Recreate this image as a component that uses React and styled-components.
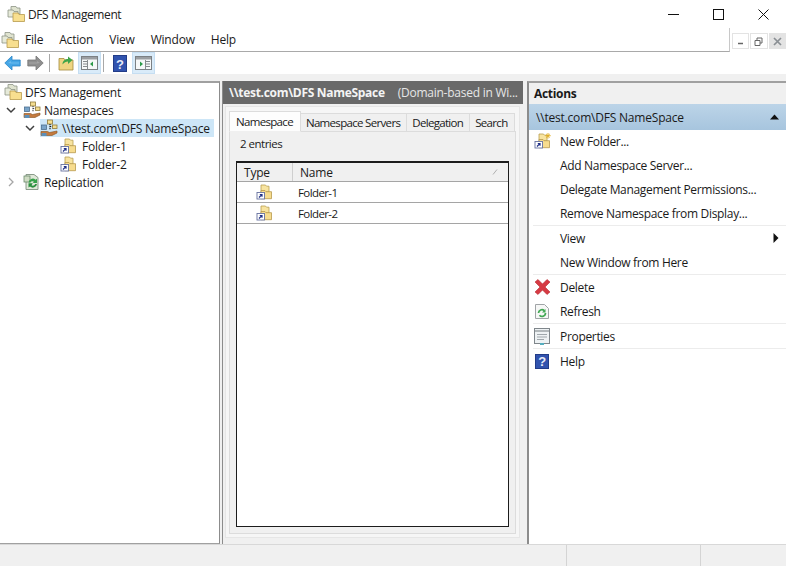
import React from 'react';
import styled, { createGlobalStyle } from 'styled-components';

const GlobalStyle = createGlobalStyle`
    html, body {
        margin: 0;
        padding: 0;
    }

    body {
        font-family: "Open Sans", "Noto Sans", sans-serif;
        font-size: 12px;
        color: #1a1a1a;
        background: #fff;
    }
`;

const Window = styled.div`
    width: 786px;
    height: 566px;
    display: flex;
    flex-direction: column;
    overflow: hidden;
    background: #f0f0f0;
`;

const TitleBar = styled.div`
    height: 28px;
    flex: none;
    display: flex;
    align-items: center;
    justify-content: space-between;
    background: #fff;
    padding-left: 7px;
`;

const TitleLeft = styled.div`
    display: flex;
    align-items: center;
    gap: 3px;
    letter-spacing: -0.4px;
    color: #222;
`;

const WindowButtons = styled.div`
    display: flex;
    align-items: center;
    gap: 34px;
    padding-right: 17px;
`;

const MenuBar = styled.div`
    height: 24px;
    flex: none;
    display: flex;
    align-items: stretch;
    background: #fff;
`;

const MenuLeft = styled.div`
    flex: 1;
    display: flex;
    align-items: center;
    padding-left: 1px;
    border-bottom: 1px solid #a9a9a9;
    border-right: 1px solid #c8c8c8;
`;

const MenuItems = styled.div`
    display: flex;
    gap: 16px;
    margin-left: 6px;
    letter-spacing: -0.2px;
`;

const MdiButtons = styled.div`
    width: 56px;
    flex: none;
    display: flex;
    gap: 1px;
    padding: 5px 0 3px 2px;
    box-sizing: border-box;
`;

const MdiButton = styled.div`
    width: 18px;
    display: flex;
    align-items: center;
    justify-content: center;
    background: ${props => (props.$muted ? '#e3e3e3' : '#fff')};
    border: 1px solid #e3e3e3;
    box-sizing: border-box;
`;

const ToolBar = styled.div`
    height: 22px;
    flex: none;
    display: flex;
    align-items: center;
    padding-left: 4px;
    background: #fff;
`;

const ToolArrow = styled.div`
    display: flex;
    margin-right: ${props => props.$after}px;
`;

const ToolButton = styled.div`
    width: 23px;
    height: 22px;
    flex: none;
    display: flex;
    align-items: center;
    justify-content: center;
    box-sizing: border-box;
    margin-right: 1px;
    background: ${props => (props.$active ? '#d9ebf9' : 'transparent')};
    border: 1px solid ${props => (props.$active ? '#c5def2' : 'transparent')};
`;

const ToolSeparator = styled.div`
    width: 1px;
    height: 18px;
    margin: 0 4px 0 1px;
    background: #a8a8a8;
`;

const Main = styled.div`
    flex: 1;
    display: grid;
    grid-template-columns: 220px 307px 259px;
    margin-top: 7px;
    min-height: 0;
`;

const TreePane = styled.div`
    background: #fff;
    border-top: 2px solid #a0a0a0;
    border-right: 1px solid #8c8c8c;
    border-bottom: 1px solid #a0a0a0;
    box-sizing: border-box;
    min-width: 0;
`;

const TreeRow = styled.div`
    height: 18px;
    display: flex;
    align-items: center;
    padding-left: ${props => props.$indent}px;
    letter-spacing: -0.2px;
    white-space: nowrap;
`;

const TreeSelection = styled.div`
    display: flex;
    align-items: center;
    height: 18px;
    width: 174px;
    gap: 4px;
    background: #cde6f7;
`;

const TreeChevron = styled.div`
    width: 14px;
    flex: none;
    display: flex;
    justify-content: center;
    margin-right: ${props => props.$after || 3}px;
`;

const TreeLabel = styled.span`
    margin-left: ${props => props.$gap || 3}px;
`;

const CenterPane = styled.div`
    display: flex;
    flex-direction: column;
    border-left: 1px solid #8c8c8c;
    margin-left: 2px;
    background: #f0f0f0;
    min-height: 0;
    min-width: 0;
    overflow: hidden;
`;

const CenterHeader = styled.div`
    height: 23px;
    width: 300px;
    box-sizing: border-box;
    flex: none;
    display: flex;
    align-items: center;
    gap: 13px;
    padding-left: 6px;
    background: #696969;
    color: #f4f4f4;
    white-space: nowrap;
    overflow: hidden;
`;

const HeaderTitle = styled.span`
    font-weight: 700;
    letter-spacing: -0.3px;
`;

const HeaderNote = styled.span`
    color: #e6e6e6;
    letter-spacing: -0.25px;
`;

const TabFrame = styled.div`
    flex: 1;
    width: 295px;
    box-sizing: border-box;
    display: flex;
    flex-direction: column;
    margin: 2px 0 6px 2px;
    padding: 4px 3px 3px 3px;
    background: #f6f6f6;
    border: 1px solid #e6e6e6;
    min-height: 0;
`;

const TabStrip = styled.div`
    display: flex;
    align-items: flex-end;
    height: 21px;
    flex: none;
    margin-bottom: -1px;
    position: relative;
`;

const Tab = styled.div`
    height: ${props => (props.$active ? 21 : 19)}px;
    box-sizing: border-box;
    display: flex;
    align-items: center;
    padding: ${props => (props.$active ? '0 7px 0 6px' : '0 6px 0 5px')};
    background: ${props => (props.$active ? '#fdfdfd' : '#f0f0f0')};
    border: 1px solid #dcdcdc;
    border-left-width: ${props => (props.$active ? 1 : 0)}px;
    border-bottom: ${props => (props.$active ? '1px solid #f0f0f0' : '1px solid #dcdcdc')};
    font-size: 11.5px;
    letter-spacing: -0.68px;
    white-space: nowrap;
`;

const TabBody = styled.div`
    flex: 1;
    display: flex;
    flex-direction: column;
    background: #f0f0f0;
    border: 1px solid #dcdcdc;
    min-height: 0;
    padding: 0 6px 6px 6px;
`;

const EntryCount = styled.div`
    height: 22px;
    flex: none;
    display: flex;
    align-items: center;
    padding: 0 0 0 4px;
    margin-bottom: 7px;
    font-size: 11.5px;
    letter-spacing: -0.5px;
`;

const ListBox = styled.div`
    flex: 1;
    background: #fff;
    border: 1px solid #1c1c1c;
    border-top-width: 2px;
    min-height: 0;
`;

const ListHeader = styled.div`
    height: 19px;
    display: grid;
    grid-template-columns: 55px 1fr;
    background: #f0f0f0;
    border-bottom: 1px solid #a5a5a5;
    box-sizing: border-box;
`;

const HeaderCell = styled.div`
    display: flex;
    align-items: center;
    justify-content: space-between;
    padding: 0 10px 0 7px;
    border-left: ${props => (props.$divided ? '1px solid #cfcfcf' : 'none')};
    letter-spacing: -0.2px;
`;

const ListRow = styled.div`
    height: 21px;
    display: grid;
    grid-template-columns: 55px 1fr;
    align-items: center;
    border-bottom: 1px solid #a5a5a5;
    box-sizing: border-box;
`;

const RowIcon = styled.div`
    display: flex;
    justify-content: center;
`;

const RowName = styled.div`
    padding-left: 6px;
    font-size: 11.5px;
    letter-spacing: -0.6px;
`;

const ActionsPane = styled.div`
    display: flex;
    flex-direction: column;
    background: #fff;
    border-left: 2px solid #8c8c8c;
    border-top: 2px solid #a0a0a0;
    min-height: 0;
    min-width: 0;
`;

const ActionsTitle = styled.div`
    height: 21px;
    flex: none;
    display: flex;
    align-items: center;
    padding-left: 5px;
    font-weight: 700;
    background: #f0f0f0;
    letter-spacing: -0.3px;
`;

const ActionsSection = styled.div`
    height: 26px;
    flex: none;
    display: flex;
    align-items: center;
    justify-content: space-between;
    padding: 0 7px;
    background: linear-gradient(#bcd4e8, #a7c5de);
    letter-spacing: -0.2px;
`;

const ActionList = styled.div`
    display: flex;
    flex-direction: column;
    margin-top: -1px;
`;

const ActionRow = styled.div`
    height: ${props => (props.$divider || props.$tall ? 25 : 24)}px;
    box-sizing: border-box;
    display: flex;
    align-items: center;
    padding-right: 7px;
    border-bottom: ${props => (props.$divider ? '1px solid #ececec' : 'none')};
    margin-left: ${props => (props.$divider ? 4 : 0)}px;
    letter-spacing: -0.32px;
`;

const ActionIcon = styled.div`
    width: ${props => (props.$divider ? 27 : 31)}px;
    padding: 0 9px 0 ${props => (props.$divider ? 0 : 4)}px;
    flex: none;
    display: flex;
    justify-content: center;
    box-sizing: border-box;
`;

const ActionText = styled.span`
    flex: 1;
    white-space: nowrap;
`;

const StatusBar = styled.div`
    height: 22px;
    flex: none;
    display: grid;
    grid-template-columns: 566px 134px 1fr;
    background: #f0f0f0;
    border-top: 1px solid #d8d8d8;
    box-sizing: border-box;
`;

const StatusCell = styled.div`
    border-left: ${props => (props.$divided ? '1px solid #d4d4d4' : 'none')};
`;

const FolderStack = () => (
    <svg width="18" height="18" viewBox="0 0 18 18">
        <path d="M4 1.500h5l1 1.500h3v6H4z" fill="#dfe3cf" stroke="#8d9486" strokeWidth="0.8" />
        <path d="M1 5h5l1 1.500h4V12H1z" fill="#e6ead9" stroke="#8d9486" strokeWidth="0.8" />
        <path d="M6 8h5l1 1.500h5.500v7H6z" fill="#f8df8f" stroke="#b89a4c" strokeWidth="0.8" />
    </svg>
);

const ShortcutFolder = ({ sparkle }) => (
    <svg width="17" height="16" viewBox="0 0 17 16">
        <path d="M5 1h4.500l1 1.200h2.500V8H5z" fill="#f8e4a0" stroke="#b9a052" strokeWidth="0.8" />
        <path d="M5 6.500h4l1 1.200h5.500v7H5z" fill="#f7dc8e" stroke="#b7994e" strokeWidth="0.8" />
        <rect x="1" y="8.500" width="7.500" height="6.500" fill="#fff" stroke="#66719f" strokeWidth="0.9" />
        <path d="M3 13.500l2.800-2.800M3.800 10.500h2.200v2.200" fill="none" stroke="#1f2f86" strokeWidth="1.200" />
        {sparkle && <path d="M14 0v5.500M11.300 2.700h5.400M12.200 1l3.600 3.500M15.800 1l-3.600 3.500" stroke="#e0ac1e" strokeWidth="0.9" />}
    </svg>
);

const NamespaceIcon = ({ dark }) => (
    <svg width="18" height="18" viewBox="0 0 18 18">
        <rect x="7.500" y="1" width="5" height="4" fill="#f3dc8f" stroke="#8f7a3a" strokeWidth="0.8" />
        <rect x="1.500" y="6" width="5" height="4.500" fill="#79a4c9" stroke="#4d6f90" strokeWidth="0.8" />
        <path d="M10 5v5.500M10 7.500h2.500" fill="none" stroke={dark ? '#111' : '#444'} strokeWidth="1.100" strokeDasharray="1.200 0.800" />
        <rect x="12.500" y="6" width="4.500" height="3.500" fill="#f3dc8f" stroke="#8f7a3a" strokeWidth="0.8" />
        <path d="M1 12.500h6.500l2 1 7.500-1.500v2l-5 2.500H1z" fill="#c47a3e" stroke="#84501f" strokeWidth="0.6" />
        <rect x="1.500" y="14" width="5" height="3" fill="#5d8fb8" />
    </svg>
);

const ReplicationIcon = () => (
    <svg width="18" height="18" viewBox="0 0 18 18">
        <path d="M3 1.500h8l4 3v12H3z" fill="#dfe8d8" stroke="#7f9180" strokeWidth="0.9" />
        <rect x="1" y="3" width="6" height="6" fill="#cfdcc4" stroke="#6c8a6c" strokeWidth="0.8" />
        <path d="M5.500 9.500a4.200 4.200 0 0 1 7-2.800l1.500-1v4.300h-4.300l1.300-1.300a2.400 2.400 0 0 0-3.700.800z" fill="#37a24a" />
        <path d="M14 11a4.200 4.200 0 0 1-7 2.500l-1.500 1v-4.300h4.300L8.500 12.300a2.400 2.400 0 0 0 3.600-1.300z" fill="#2c8f3f" />
    </svg>
);

const Chevron = ({ open }) => (
    <svg width="10" height="10" viewBox="0 0 10 10">
        {open
            ? <path d="M1 3l4 4 4-4" fill="none" stroke="#404040" strokeWidth="1.500" />
            : <path d="M3 1l4 4-4 4" fill="none" stroke="#a6a6a6" strokeWidth="1.300" />}
    </svg>
);

const BackArrow = () => (
    <svg width="17" height="16" viewBox="0 0 17 16">
        <path d="M.8 8L8 1v4h8.200v6H8v4z" fill="#45a6e6" stroke="#2c86c6" strokeWidth="0.8" />
        <path d="M4 8l3-2v1.500h8v1H7z" fill="#6dbcee" />
    </svg>
);

const ForwardArrow = () => (
    <svg width="17" height="16" viewBox="0 0 17 16">
        <path d="M16.200 8L9 1v4H.8v6H9v4z" fill="#8f8f8f" stroke="#777" strokeWidth="0.8" />
        <path d="M13 8l-3-2v1.500H2v1h8z" fill="#a5a5a5" />
    </svg>
);

const UpFolder = () => (
    <svg width="16" height="16" viewBox="0 0 16 16">
        <path d="M1 3.500h5l1 1.500h8v10H1z" fill="#efd582" stroke="#a38a3c" strokeWidth="0.8" />
        <path d="M4.500 9.500C4.500 5.500 7.500 4 10 4V1.500L14.500 5 10 9V6.500C8 6.500 6 7.500 4.500 9.500z" fill="#3ea54a" />
    </svg>
);

const PaneToggle = ({ flip }) => (
    <svg width="17" height="14" viewBox="0 0 17 14">
        <rect x="0.500" y="0.500" width="16" height="13" fill="#f6f8f9" stroke="#7b8084" />
        <rect x="1" y="1" width="15" height="2.500" fill="#9a9ea2" />
        <path d={flip ? 'M2 5.500h4M2 8h4M2 10.500h4M6.500 4v9' : 'M11 5.500h4M11 8h4M11 10.500h4M10.500 4v9'} stroke="#868b8f" strokeWidth="1" />
        <path d={flip ? 'M12 5.500v5l-3-2.500z' : 'M5 5.500v5l3-2.500z'} fill="#2c9a4a" />
    </svg>
);

const HelpIcon = ({ height }) => (
    <svg width="14" height={height} viewBox={`0 0 14 ${height}`}>
        <rect x="0.500" y="0.500" width="13" height={height - 1} fill="#3153ae" stroke="#223c88" />
        <text x="7" y={height - 3.5} textAnchor="middle" fontFamily="Liberation Sans, sans-serif" fontWeight="700" fontSize="13" fill="#e8ecf8">?</text>
    </svg>
);

const DeleteIcon = () => (
    <svg width="17" height="16" viewBox="0 0 17 16">
        <path d="M1 3l3-2.500 4.500 4.500L13 .5 16 3l-5 5 5 5-3 2.500L8.500 11 4 15.500 1 13l5-5z" fill="#d63a43" stroke="#bb2b33" strokeWidth="0.6" />
    </svg>
);

const RefreshIcon = () => (
    <svg width="14" height="15" viewBox="0 0 14 15">
        <path d="M.5 .5h9l4 4v10H.5z" fill="#f6f7f6" stroke="#a0a4a7" />
        <path d="M3.500 9a3.400 3.400 0 0 1 5.800-2.300M10.500 9a3.400 3.400 0 0 1-6 2.200" fill="none" stroke="#41a853" strokeWidth="1.700" />
        <path d="M10.500 5v3.500H7z" fill="#41a853" />
    </svg>
);

const PropertiesIcon = () => (
    <svg width="16" height="17" viewBox="0 0 16 17">
        <rect x="0.500" y="0.500" width="15" height="15" fill="#eef2f4" stroke="#7f868b" />
        <path d="M1 3h14" stroke="#9ea4a9" strokeWidth="1.500" />
        <path d="M3 6.500h10M3 9h10M3 11.500h7" stroke="#a0a7ac" strokeWidth="1" />
        <rect x="6" y="15" width="4" height="2" fill="#55aebf" />
    </svg>
);

const tabs = ['Namespace', 'Namespace Servers', 'Delegation', 'Search'];
const menus = ['File', 'Action', 'View', 'Window', 'Help'];
const folders = ['Folder-1', 'Folder-2'];

export default function App() {
    return (
        <Window>
            <GlobalStyle />
            <TitleBar>
                <TitleLeft>
                    <FolderStack />
                    DFS Management
                </TitleLeft>
                <WindowButtons>
                    <svg width="11" height="11" viewBox="0 0 11 11"><path d="M0 5.500h11" stroke="#111" strokeWidth="1" /></svg>
                    <svg width="11" height="11" viewBox="0 0 11 11"><rect x="0.500" y="0.500" width="10" height="10" fill="none" stroke="#111" /></svg>
                    <svg width="11" height="11" viewBox="0 0 11 11"><path d="M.5 .5l10 10M10.500 .5l-10 10" stroke="#111" strokeWidth="1" /></svg>
                </WindowButtons>
            </TitleBar>
            <MenuBar>
                <MenuLeft>
                    <FolderStack />
                    <MenuItems>
                        {menus.map(menu => <span key={menu}>{menu}</span>)}
                    </MenuItems>
                </MenuLeft>
                <MdiButtons>
                    <MdiButton>
                        <svg width="8" height="8" viewBox="0 0 8 8"><path d="M1 6.500h5" stroke="#666" strokeWidth="1.500" /></svg>
                    </MdiButton>
                    <MdiButton>
                        <svg width="9" height="9" viewBox="0 0 9 9"><path d="M1 3.500h5v5H1zM3 3.500V1h5v5H6" fill="none" stroke="#666" /></svg>
                    </MdiButton>
                    <MdiButton $muted>
                        <svg width="9" height="9" viewBox="0 0 9 9"><path d="M1 1l7 7M8 1L1 8" stroke="#8a8f94" strokeWidth="1.700" /></svg>
                    </MdiButton>
                </MdiButtons>
            </MenuBar>
            <ToolBar>
                <ToolArrow $after={6}><BackArrow /></ToolArrow>
                <ToolArrow $after={4}><ForwardArrow /></ToolArrow>
                <ToolSeparator />
                <ToolButton><UpFolder /></ToolButton>
                <ToolButton $active><PaneToggle flip /></ToolButton>
                <ToolSeparator />
                <ToolButton><HelpIcon height={17} /></ToolButton>
                <ToolButton $active><PaneToggle /></ToolButton>
            </ToolBar>
            <Main>
                <TreePane>
                    <TreeRow $indent={4}>
                        <FolderStack />
                        <TreeLabel>DFS Management</TreeLabel>
                    </TreeRow>
                    <TreeRow $indent={4}>
                        <TreeChevron $after={5}><Chevron open /></TreeChevron>
                        <NamespaceIcon />
                        <TreeLabel>Namespaces</TreeLabel>
                    </TreeRow>
                    <TreeRow $indent={23}>
                        <TreeChevron><Chevron open /></TreeChevron>
                        <TreeSelection>
                            <NamespaceIcon dark />
                            <span>\\test.com\DFS NameSpace</span>
                        </TreeSelection>
                    </TreeRow>
                    {folders.map(folder => (
                        <TreeRow $indent={60} key={folder}>
                            <ShortcutFolder />
                            <TreeLabel $gap={5}>{folder}</TreeLabel>
                        </TreeRow>
                    ))}
                    <TreeRow $indent={4}>
                        <TreeChevron $after={5}><Chevron /></TreeChevron>
                        <ReplicationIcon />
                        <TreeLabel>Replication</TreeLabel>
                    </TreeRow>
                </TreePane>
                <CenterPane>
                    <CenterHeader>
                        <HeaderTitle>\\test.com\DFS NameSpace</HeaderTitle>
                        <HeaderNote>(Domain-based in Wi...</HeaderNote>
                    </CenterHeader>
                    <TabFrame>
                        <TabStrip>
                            {tabs.map((tab, index) => <Tab key={tab} $active={index === 0}>{tab}</Tab>)}
                        </TabStrip>
                        <TabBody>
                            <EntryCount>2 entries</EntryCount>
                            <ListBox>
                                <ListHeader>
                                    <HeaderCell>Type</HeaderCell>
                                    <HeaderCell $divided>
                                        Name
                                        <svg width="6" height="6" viewBox="0 0 6 6"><path d="M1 5.500L5 .5" stroke="#b0b0b0" /></svg>
                                    </HeaderCell>
                                </ListHeader>
                                {folders.map(folder => (
                                    <ListRow key={folder}>
                                        <RowIcon><ShortcutFolder /></RowIcon>
                                        <RowName>{folder}</RowName>
                                    </ListRow>
                                ))}
                            </ListBox>
                        </TabBody>
                    </TabFrame>
                </CenterPane>
                <ActionsPane>
                    <ActionsTitle>Actions</ActionsTitle>
                    <ActionsSection>
                        <span>\\test.com\DFS NameSpace</span>
                        <svg width="9" height="6" viewBox="0 0 9 6"><path d="M0 5.500L4.500 0.500 9 5.500z" fill="#111" /></svg>
                    </ActionsSection>
                    <ActionList>
                        <ActionRow>
                            <ActionIcon><ShortcutFolder sparkle /></ActionIcon>
                            <ActionText>New Folder...</ActionText>
                        </ActionRow>
                        <ActionRow>
                            <ActionIcon />
                            <ActionText>Add Namespace Server...</ActionText>
                        </ActionRow>
                        <ActionRow>
                            <ActionIcon />
                            <ActionText>Delegate Management Permissions...</ActionText>
                        </ActionRow>
                        <ActionRow $divider>
                            <ActionIcon $divider />
                            <ActionText>Remove Namespace from Display...</ActionText>
                        </ActionRow>
                        <ActionRow>
                            <ActionIcon />
                            <ActionText>View</ActionText>
                            <svg width="6" height="10" viewBox="0 0 6 10"><path d="M.5 0L5.500 5 .5 10z" fill="#111" /></svg>
                        </ActionRow>
                        <ActionRow $divider>
                            <ActionIcon $divider />
                            <ActionText>New Window from Here</ActionText>
                        </ActionRow>
                        <ActionRow>
                            <ActionIcon><DeleteIcon /></ActionIcon>
                            <ActionText>Delete</ActionText>
                        </ActionRow>
                        <ActionRow $divider>
                            <ActionIcon $divider><RefreshIcon /></ActionIcon>
                            <ActionText>Refresh</ActionText>
                        </ActionRow>
                        <ActionRow $divider>
                            <ActionIcon $divider><PropertiesIcon /></ActionIcon>
                            <ActionText>Properties</ActionText>
                        </ActionRow>
                        <ActionRow $tall>
                            <ActionIcon><HelpIcon height={15} /></ActionIcon>
                            <ActionText>Help</ActionText>
                        </ActionRow>
                    </ActionList>
                </ActionsPane>
            </Main>
            <StatusBar>
                <StatusCell />
                <StatusCell $divided />
                <StatusCell $divided />
            </StatusBar>
        </Window>
    );
}
